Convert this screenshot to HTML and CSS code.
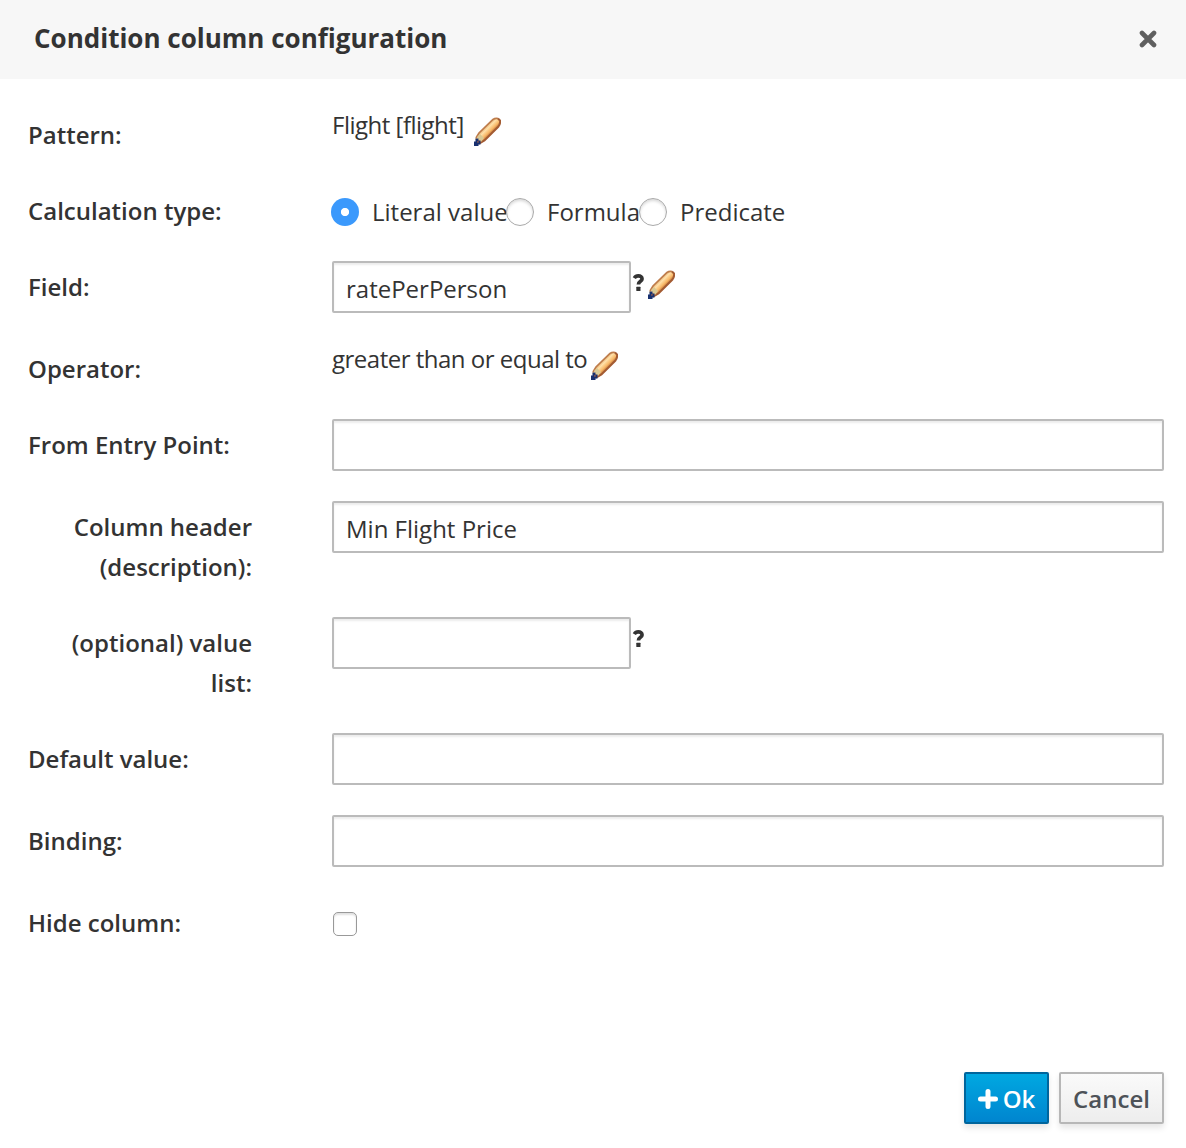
FILE: index.html
```html
<!DOCTYPE html>
<html lang="en">
<head>
<meta charset="utf-8">
<title>Condition column configuration</title>
<link rel="stylesheet" href="styles.css">
</head>
<body>
<svg width="0" height="0" class="defs" aria-hidden="true">
  <defs>
    <linearGradient id="wood" gradientUnits="userSpaceOnUse" x1="9" y1="9" x2="19" y2="19">
      <stop offset="0.1" stop-color="#d99a5c"/><stop offset="0.4" stop-color="#ffe0a8"/><stop offset="0.65" stop-color="#f8b868"/><stop offset="0.9" stop-color="#a95a28"/>
    </linearGradient>
    <symbol id="pencil" viewBox="0 0 28 30">
      <path d="M2 22 6 16 20 2.5Q22 1 25 1.5L27 3.5Q27.500 7 25.500 9.500L11.500 23.500 5.500 27Z" fill="url(#wood)"/>
      <path d="M3 21 6 16 20 2.5Q22 1 25 1.500" fill="none" stroke="#be7c4b" stroke-width="1.700"/>
      <path d="M25 1.500 27 3.500Q27.500 7 25.500 9.500L11.500 23.500 6 26.500" fill="none" stroke="#a35b32" stroke-width="2"/>
      <path d="M4 20 7 17 11 21 8 25Z" fill="#d9c994"/>
      <path d="M2.500 21.500h3v2h2v4H5.500v1.500H1v-4.500h1.500z" fill="#18306f"/>
      <path d="M4 24h1.800v1.800H4z" fill="#754f55"/>
    </symbol>
  </defs>
</svg>
<div class="dialog">
  <header class="dialog-header">
    <h1 class="title">Condition column configuration</h1>
    <button class="close" aria-label="Close"><svg width="18" height="18" viewBox="0 0 18 18"><path d="M3 3 15 15M15 3 3 15" stroke="#5f5f5f" stroke-width="4.600" stroke-linecap="round"/></svg></button>
  </header>
  <form class="form">
    <div class="row"><span class="label">Pattern:</span><div class="field"><span class="value pattern">Flight [flight]</span><svg class="pencil low"><use href="#pencil"/></svg></div></div>
    <div class="row"><span class="label">Calculation type:</span><div class="field radios">
      <label class="option literal"><input type="radio" name="calc" class="radio" checked><span>Literal value</span></label>
      <label class="option formula"><input type="radio" name="calc" class="radio"><span>Formula</span></label>
      <label class="option"><input type="radio" name="calc" class="radio"><span>Predicate</span></label>
    </div></div>
    <div class="row"><span class="label">Field:</span><div class="field"><input class="text short" value="ratePerPerson"><svg class="help" viewBox="0 0 13 20"><use href="#question"/></svg><svg class="pencil"><use href="#pencil"/></svg></div></div>
    <div class="row"><span class="label">Operator:</span><div class="field"><span class="value operator">greater than or equal to</span><svg class="pencil low"><use href="#pencil"/></svg></div></div>
    <div class="row"><span class="label">From Entry Point:</span><div class="field"><input class="text"></div></div>
    <div class="row"><span class="label wrapped">Column header (description):</span><div class="field"><input class="text" value="Min Flight Price"></div></div>
    <div class="row"><span class="label wrapped">(optional) value list:</span><div class="field"><input class="text short"><svg class="help" viewBox="0 0 13 20"><use href="#question"/></svg></div></div>
    <div class="row"><span class="label">Default value:</span><div class="field"><input class="text"></div></div>
    <div class="row"><span class="label">Binding:</span><div class="field"><input class="text"></div></div>
    <div class="row"><span class="label">Hide column:</span><div class="field"><input type="checkbox" class="checkbox"></div></div>
  </form>
  <footer class="footer">
    <button class="btn primary"><svg width="20" height="20" viewBox="0 0 20 20"><path d="M10 2.500v15M2.500 10h15" stroke="#fff" stroke-width="5" stroke-linecap="round"/></svg><span>Ok</span></button>
    <button class="btn">Cancel</button>
  </footer>
</div>
<svg width="0" height="0" class="defs" aria-hidden="true">
  <symbol id="question" viewBox="0 0 13 20">
    <path d="M2.300 5.200C3.300 3.500 4.700 2.900 6.300 2.900 8.500 2.900 10.100 4.100 10.100 5.900 10.100 8.400 6.400 8.200 6.400 11.500" fill="none" stroke="#333" stroke-width="3.600"/>
    <rect x="4.300" y="13.700" width="4.200" height="4.200" rx=".5" fill="#333"/>
  </symbol>
</svg>
</body>
</html>
```
FILE: styles.css
```css
* { box-sizing: border-box; }
body { margin: 0; background: #fff; color: #333; font: 24px/40px "Open Sans", sans-serif; }
.defs { position: absolute; }
.dialog { height: 1148px; display: flex; flex-direction: column; }
.dialog-header { height: 79px; padding: 0 29px 3px 34px; background: #f7f7f7; display: flex; align-items: center; justify-content: space-between; }
.title { margin: 0; font-size: 26px; font-weight: 700; line-height: 36px; }
.close { padding: 2px 0 0; border: 0; background: none; display: flex; }
.form { padding: 30px 22px 0 28px; }
.row { display: flex; align-items: flex-start; margin-bottom: 30px; }
.label { width: 304px; padding-top: 6px; flex: none; font-weight: 600; }
.wrapped { padding-right: 80px; text-align: right; }
.field { flex: 1; display: flex; align-items: flex-start; }
.value { height: 34px; line-height: 32px; white-space: nowrap; }
.pattern { width: 141px; letter-spacing: -0.5px; }
.operator { width: 258px; letter-spacing: -0.5px; }
.pencil { width: 28px; height: 30px; margin: 9px 0 0 2px; }
.pencil.low { margin: 8px 0 0; }
.help { width: 13px; height: 20px; margin: 12px 0 0 1px; }
.text { width: 100%; height: 52px; padding: 4px 12px 2px; border: 2px solid #bbb; border-radius: 2px; background: #fff; box-shadow: inset 0 2px 2px rgba(0, 0, 0, .075); color: #333; font: inherit; outline: 0; }
.short { width: 299px; }
.radios { padding-top: 7px; }
.option { display: flex; align-items: center; gap: 13px; height: 40px; margin-top: 0; white-space: nowrap; }
.radios { height: 46px; }
.literal { width: 175px; }
.formula { width: 133px; }
.radio { appearance: none; width: 28px; height: 28px; margin: 0 0 0 -1px; flex: none; border: 1px solid #aaa; border-radius: 50%; background: #fff; box-shadow: inset 0 2px 3px rgba(0, 0, 0, .15); }
.radio:checked { border: 0; background: radial-gradient(circle, #fff 0 3.700px, #3b99fc 4.500px); box-shadow: none; }
.checkbox { appearance: none; width: 24px; height: 24px; margin: 15px 0 0 1px; border: 1px solid #999; border-radius: 5px; background: #fff; box-shadow: inset 0 2px 2px rgba(0, 0, 0, .12); }
.footer { margin-top: auto; padding: 0 22px 24px; display: flex; justify-content: flex-end; gap: 10px; }
.btn { width: 105px; height: 52px; padding: 1px 0 0; border: 2px solid #b7b7b7; border-radius: 2px; background: linear-gradient(#fafafa, #ededed); box-shadow: 0 4px 6px rgba(0, 0, 0, .1); color: #4d5258; font: 600 24px/40px "Open Sans", sans-serif; }
.primary { width: 85px; display: flex; align-items: center; justify-content: center; gap: 5px; border-color: #00659c; background: linear-gradient(#00a8e1, #0085cf); color: #fff; }
```
